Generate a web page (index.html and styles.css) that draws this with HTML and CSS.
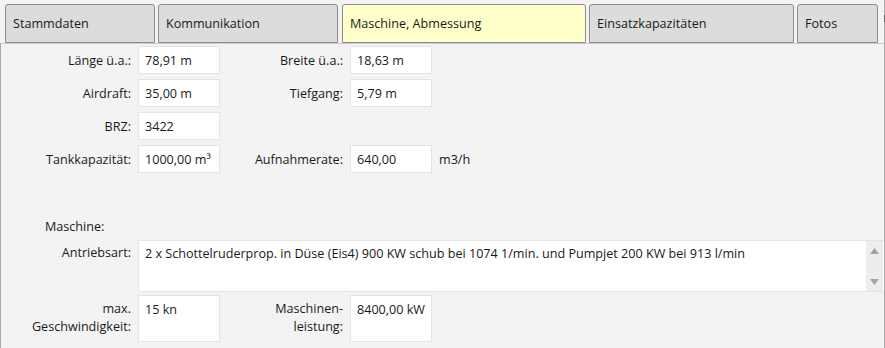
FILE: index.html
```html
<!DOCTYPE html>
<html lang="de">
<head>
<meta charset="utf-8">
<title>Maschine, Abmessung</title>
<link rel="stylesheet" href="styles.css">
</head>
<body>
<div class="window">
  <div class="main">
    <div class="tabs">
      <div class="tab tab-1">Stammdaten</div>
      <div class="tab tab-2">Kommunikation</div>
      <div class="tab tab-3 active">Maschine, Abmessung</div>
      <div class="tab tab-4">Einsatzkapazitäten</div>
      <div class="tab tab-5">Fotos</div>
    </div>
    <div class="panel">
      <div class="row">
        <div class="label">Länge ü.a.:</div>
        <div class="field">78,91 m</div>
        <div class="label">Breite ü.a.:</div>
        <div class="field">18,63 m</div>
      </div>
      <div class="row">
        <div class="label">Airdraft:</div>
        <div class="field">35,00 m</div>
        <div class="label">Tiefgang:</div>
        <div class="field">5,79 m</div>
      </div>
      <div class="row">
        <div class="label">BRZ:</div>
        <div class="field">3422</div>
      </div>
      <div class="row">
        <div class="label">Tankkapazität:</div>
        <div class="field">1000,00 m³</div>
        <div class="label">Aufnahmerate:</div>
        <div class="field">640,00</div>
        <div class="unit">m3/h</div>
      </div>
      <div class="section">Maschine:</div>
      <div class="row row-text">
        <div class="label label-top">Antriebsart:</div>
        <div class="textarea">
          <div class="textarea-text">2 x Schottelruderprop. in Düse (Eis4) 900 KW schub bei 1074 1/min. und Pumpjet 200 KW bei 913 l/min</div>
          <div class="vscroll">
            <svg class="arrow" width="9" height="6" viewBox="0 0 9 6"><polygon points="0,6 9,6 4.5,0" fill="#a3a3a3"/></svg>
            <svg class="arrow" width="9" height="6" viewBox="0 0 9 6"><polygon points="0,0 9,0 4.5,6" fill="#a3a3a3"/></svg>
          </div>
        </div>
      </div>
      <div class="row row-tall">
        <div class="label label-top">max.<br>Geschwindigkeit:</div>
        <div class="field field-top">15 kn</div>
        <div class="label label-top">Maschinen-<br>leistung:</div>
        <div class="field field-top">8400,00 kW</div>
      </div>
    </div>
  </div>
  <div class="edge"><div class="edge-thumb"></div></div>
</div>
</body>
</html>
```
FILE: styles.css
```css
html, body {
  margin: 0;
  padding: 0;
  background: #f3f3f3;
}
body {
  font-family: "Open Sans", "Noto Sans", sans-serif;
  font-size: 12.6px;
  color: #1a1a1a;
}
.window {
  display: flex;
  width: 885px;
  height: 348px;
  overflow: hidden;
}
.main {
  flex: 1;
  display: flex;
  flex-direction: column;
  min-width: 0;
}
.edge {
  width: 1px;
  background: #a9a9a9;
  padding-top: 15px;
}
.edge-thumb {
  height: 7px;
  background: #666;
}
.tabs {
  display: flex;
  gap: 3px;
  padding: 4px 0 0 5px;
  height: 39px;
  box-sizing: content-box;
}
.tab {
  box-sizing: border-box;
  height: 39px;
  border: 1px solid #8c8c8c;
  border-radius: 3px 3px 0 0;
  background: #dcdcdc;
  padding-left: 7px;
  display: flex;
  align-items: center;
  white-space: nowrap;
}
.tab.active { background: #ffffcc; }
.tab-1 { width: 150px; }
.tab-2 { width: 180px; margin-right: 1px; }
.tab-3 { width: 244px; }
.tab-4 { width: 205px; }
.tab-5 { width: 81px; }
.panel {
  flex: 1;
  border-top: 1px solid #cbcbcb;
  border-left: 1px solid #a9a9a9;
  padding-top: 2px;
  display: flex;
  flex-direction: column;
  gap: 5px;
}
.row {
  display: grid;
  grid-template-columns: 130px 82px 116px 82px auto;
  column-gap: 7px;
  height: 28px;
  align-items: center;
}
.label {
  text-align: right;
  white-space: nowrap;
}
.field {
  box-sizing: border-box;
  height: 28px;
  background: #fff;
  border: 1px solid #e4e4e4;
  padding-left: 6px;
  display: flex;
  align-items: center;
  white-space: nowrap;
}
.unit { padding-left: 0; }
.section {
  margin-top: 41px;
  padding-left: 44px;
  height: 16px;
  line-height: 16px;
}
.row-text {
  height: 52px;
  grid-template-columns: 130px 1fr;
  align-items: stretch;
}
.label-top {
  padding-top: 4px;
  line-height: 18px;
}
.textarea {
  box-sizing: border-box;
  height: 52px;
  background: #fff;
  border: 1px solid #e4e4e4;
  border-right: none;
  display: flex;
}
.textarea-text {
  flex: 1;
  padding: 4px 0 0 6px;
  line-height: 18px;
  white-space: nowrap;
  overflow: hidden;
}
.vscroll {
  width: 17px;
  margin-right: 1px;
  background: #ededed;
  display: flex;
  flex-direction: column;
  justify-content: space-between;
  align-items: center;
  padding: 7px 0 6px;
}
.arrow { display: block; }
.row-tall {
  height: 47px;
  align-items: stretch;
  margin-top: -2px;
}
.row-tall .label-top { padding-top: 5px; }
.field-top {
  height: 47px;
  align-items: flex-start;
  padding-top: 5px;
  line-height: 18px;
}
```
